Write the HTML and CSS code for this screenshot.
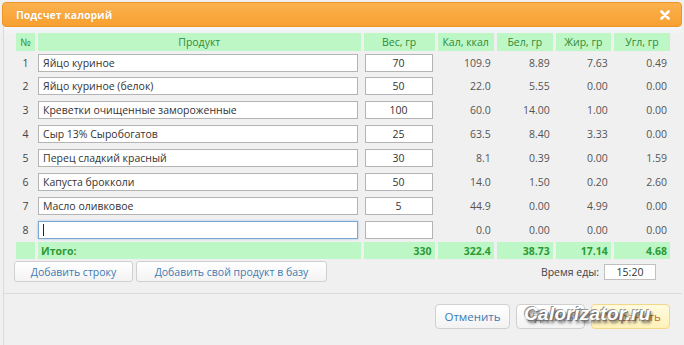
FILE: index.html
```html
<!DOCTYPE html>
<html lang="ru">
<head>
    <meta charset="UTF-8">
    <title>Подсчет калорий</title>
    <link rel="stylesheet" href="styles.css">
</head>
<body>
    <div class="dialog">
        <div class="titlebar">
            <span class="title">Подсчет калорий</span>
            <svg class="close" width="10" height="10" viewBox="0 0 10 10">
                <path d="M1.5 1.5 L8.5 8.5 M8.5 1.5 L1.5 8.5" stroke="#fff" stroke-width="2.6" stroke-linecap="round"/>
            </svg>
        </div>

        <div class="dialog-body">
            <table class="calc">
                <thead>
                    <tr>
                        <th class="c-num">№</th>
                        <th class="c-prod">Продукт</th>
                        <th class="c-weight">Вес, гр</th>
                        <th class="c-kcal">Кал, ккал</th>
                        <th class="c-val">Бел, гр</th>
                        <th class="c-val2">Жир, гр</th>
                        <th class="c-val">Угл, гр</th>
                    </tr>
                </thead>
                <tbody>
                    <tr>
                        <td class="num">1</td>
                        <td><input class="field" type="text" value="Яйцо куриное"></td>
                        <td><input class="field center" type="text" value="70"></td>
                        <td class="val">109.9</td><td class="val">8.89</td><td class="val">7.63</td><td class="val">0.49</td>
                    </tr>
                    <tr>
                        <td class="num">2</td>
                        <td><input class="field" type="text" value="Яйцо куриное (белок)"></td>
                        <td><input class="field center" type="text" value="50"></td>
                        <td class="val">22.0</td><td class="val">5.55</td><td class="val">0.00</td><td class="val">0.00</td>
                    </tr>
                    <tr>
                        <td class="num">3</td>
                        <td><input class="field" type="text" value="Креветки очищенные замороженные"></td>
                        <td><input class="field center" type="text" value="100"></td>
                        <td class="val">60.0</td><td class="val">14.00</td><td class="val">1.00</td><td class="val">0.00</td>
                    </tr>
                    <tr>
                        <td class="num">4</td>
                        <td><input class="field" type="text" value="Сыр 13% Сыробогатов"></td>
                        <td><input class="field center" type="text" value="25"></td>
                        <td class="val">63.5</td><td class="val">8.40</td><td class="val">3.33</td><td class="val">0.00</td>
                    </tr>
                    <tr>
                        <td class="num">5</td>
                        <td><input class="field" type="text" value="Перец сладкий красный"></td>
                        <td><input class="field center" type="text" value="30"></td>
                        <td class="val">8.1</td><td class="val">0.39</td><td class="val">0.00</td><td class="val">1.59</td>
                    </tr>
                    <tr>
                        <td class="num">6</td>
                        <td><input class="field" type="text" value="Капуста брокколи"></td>
                        <td><input class="field center" type="text" value="50"></td>
                        <td class="val">14.0</td><td class="val">1.50</td><td class="val">0.20</td><td class="val">2.60</td>
                    </tr>
                    <tr>
                        <td class="num">7</td>
                        <td><input class="field" type="text" value="Масло оливковое"></td>
                        <td><input class="field center" type="text" value="5"></td>
                        <td class="val">44.9</td><td class="val">0.00</td><td class="val">4.99</td><td class="val">0.00</td>
                    </tr>
                    <tr>
                        <td class="num">8</td>
                        <td>
                            <span class="focus-wrap">
                                <input class="field focused" type="text" value="">
                                <span class="caret"></span>
                            </span>
                        </td>
                        <td><input class="field center" type="text" value=""></td>
                        <td class="val">0.0</td><td class="val">0.00</td><td class="val">0.00</td><td class="val">0.00</td>
                    </tr>
                </tbody>
                <tfoot>
                    <tr>
                        <td></td>
                        <td class="total-label">Итого:</td>
                        <td class="total">330</td>
                        <td class="total">322.4</td>
                        <td class="total">38.73</td>
                        <td class="total">17.14</td>
                        <td class="total">4.68</td>
                    </tr>
                </tfoot>
            </table>

            <div class="tools">
                <div class="tools-left">
                    <button class="btn">Добавить строку</button>
                    <button class="btn">Добавить свой продукт в базу</button>
                </div>
                <label class="meal-time">
                    Время еды:
                    <input class="field time" type="text" value="15:20">
                </label>
            </div>

            <div class="actions">
                <button class="btn btn-lg">Отменить</button>
                <button class="btn btn-lg btn-muted">Удалить</button>
                <button class="btn btn-lg btn-save">Сохранить</button>
                <span class="watermark">Calorizator.ru</span>
            </div>
        </div>
    </div>
</body>
</html>
```

FILE: styles.css
```css
* {
    box-sizing: border-box;
    margin: 0;
    padding: 0;
}

body {
    background-color: #f0f0f0;
    font-family: "Open Sans", "Noto Sans", sans-serif;
    font-size: 10.5px;
    color: #444;
}

.dialog {
    padding: 2px 2px 0 2px;
    height: 345px;
}

.titlebar {
    display: flex;
    justify-content: space-between;
    align-items: center;
    height: 25px;
    padding: 0 11px 0 13px;
    border: 1px solid #ec9426;
    border-radius: 4px;
    background: linear-gradient(#fbb24e, #f8a031);
}

.title {
    color: #fff;
    font-weight: bold;
    font-size: 10.5px;
    text-shadow: 0 0 1px rgba(200, 110, 20, 0.6);
}

.close {
    display: block;
}

.dialog-body {
    margin-left: 1px;
    border-left: 1px solid #dadada;
    height: 318px;
    padding-top: 6px;
    background: linear-gradient(#f5f7f8 0, #f0f0f0 8px);
}

/* TABLE */
.calc {
    margin-left: 9px;
    border-collapse: separate;
    border-spacing: 3px 0;
    table-layout: fixed;
    width: 660px;
}

.calc th {
    height: 18px;
    background-color: #bef7c6;
    color: #2f8c3a;
    font-weight: normal;
    font-size: 10.5px;
    line-height: 18px;
}

.c-num { width: 19px; }
.c-prod { width: 322px; }
.c-weight { width: 71px; }
.c-kcal { width: 56px; }
.c-val { width: 56px; }
.c-val2 { width: 55px; }

.calc tbody td {
    height: 24px;
    padding: 0;
}

.calc tbody tr:first-child td {
    height: 23px;
}

.num {
    text-align: center;
}

.val {
    text-align: right;
    padding-right: 3px !important;
    color: #555;
}

.field {
    display: block;
    width: 100%;
    height: 18px;
    border: 1px solid #b4b4b4;
    background: #fff;
    font-family: "Open Sans", "Noto Sans", sans-serif;
    font-size: 10.5px;
    color: #333;
    padding: 0 4px;
    outline: none;
}

.calc td:nth-child(2) .field {
    width: 320px;
}

.calc td:nth-child(3) .field {
    width: 68px;
    margin-left: 1px;
}

.center {
    text-align: center;
}

.focus-wrap {
    position: relative;
    display: block;
}

.focused {
    border-color: #7ea6d4;
    box-shadow: 0 0 2px rgba(80, 140, 210, 0.5);
}

.caret {
    position: absolute;
    left: 5px;
    top: 3px;
    width: 1px;
    height: 12px;
    background: #222;
}

.calc tfoot td {
    height: 17px;
    background-color: #bef7c6;
    color: #2c9a36;
    font-weight: bold;
    text-align: right;
    padding-right: 3px;
}

.calc tfoot .total-label {
    text-align: left;
    padding-left: 3px;
}

/* TOOLS */
.tools {
    display: flex;
    justify-content: space-between;
    align-items: center;
    margin-top: 2px;
    padding: 0 26px 0 10px;
}

.tools-left {
    display: flex;
    gap: 3px;
}

.btn {
    height: 21px;
    padding: 0;
    border: 1px solid #d0d0d0;
    border-radius: 3px;
    background: linear-gradient(#ffffff, #f3f3f3);
    color: #3d7ab3;
    font-family: "Open Sans", "Noto Sans", sans-serif;
    font-size: 10.5px;
    white-space: nowrap;
    cursor: pointer;
}

.tools-left .btn:first-child {
    width: 119px;
}

.tools-left .btn:last-child {
    width: 191px;
}

.meal-time {
    display: flex;
    align-items: center;
    gap: 5px;
    color: #444;
}

.time {
    width: 52px;
    height: 16px;
    text-align: center;
    border-color: #c0c0c0;
}

/* ACTIONS */
.actions {
    position: relative;
    display: flex;
    justify-content: flex-end;
    gap: 6px;
    margin-top: 11px;
    padding: 10px 12px 0 0;
    border-top: 1px solid #dcdcdc;
}

.btn-lg {
    height: 25px;
    font-size: 11.5px;
    border-radius: 4px;
}

.btn-lg:nth-child(1) { width: 75px; }
.btn-lg:nth-child(2) { width: 69px; }
.btn-lg:nth-child(3) { width: 79px; }

.btn-muted {
    color: #8a8a8a;
}

.btn-save {
    border-color: #f3d88a;
    background: linear-gradient(#fffbe0, #fff1b8);
    color: #c8692a;
}

.watermark {
    position: absolute;
    left: 520px;
    top: 9px;
    font-family: "Liberation Sans", Arial, sans-serif;
    font-weight: bold;
    font-style: italic;
    font-size: 19px;
    color: #fff;
    letter-spacing: 0.3px;
    text-shadow: 1px 1px 0 #777, 2px 3px 3px rgba(0, 0, 0, 0.6), -1px -1px 0 #999;
}
```
